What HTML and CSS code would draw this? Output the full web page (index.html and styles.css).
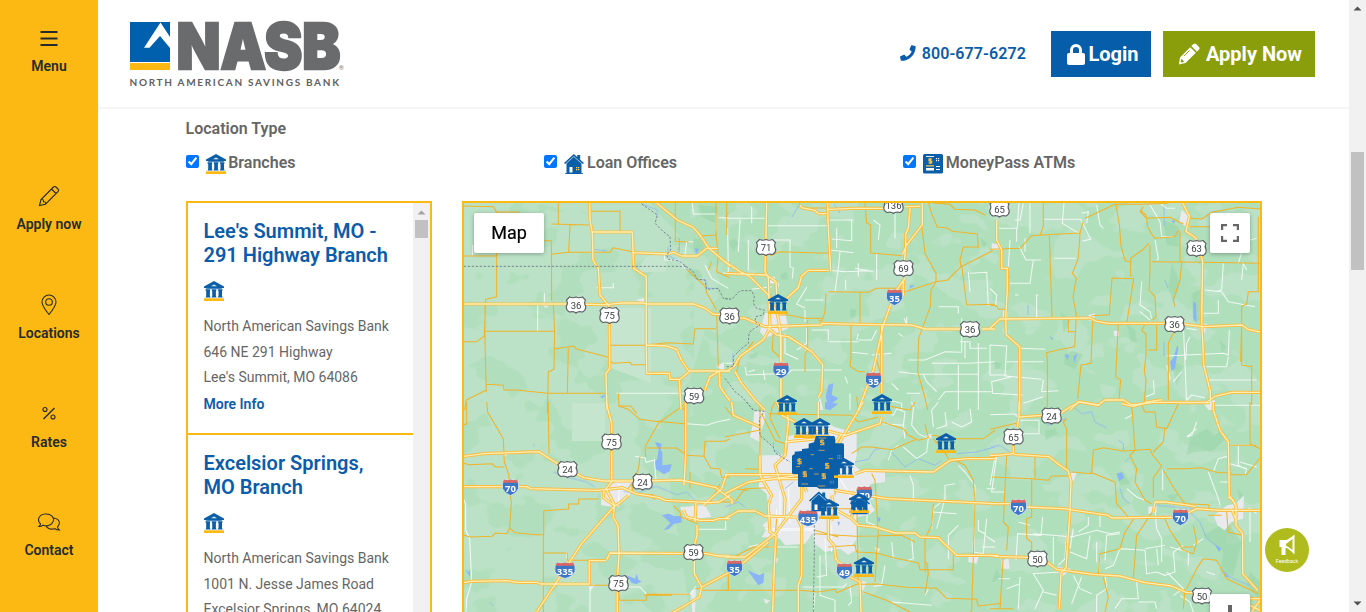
FILE: index.html
```html
<!DOCTYPE html>
<html lang="en">
<head>
<meta charset="utf-8">
<title>NASB Locations</title>
<link rel="stylesheet" href="styles.css">
</head>
<body>
<svg class="defs" width="0" height="0" aria-hidden="true">
  <symbol id="bank" viewBox="0 0 20 20"><path fill="#0b5fa8" d="M0 7V5.4L10 0l10 5.4V7h-1.500l-1 .8h-15L1.500 7zM1.500 8.200h4.700v1L5.900 10v5l.8 1.400H1.500L2.200 15v-5L1.500 9.200zM7.700 8.200h4.700v1l-.5.8v5l.8 1.400H7.500L8.200 15v-5L7.700 9.200zM13.900 8.200h4.600v1l-.5.8v5l.8 1.400h-5.100l.8-1.400v-5l-.6-.8z"/><path fill="#e5f0ee" d="M7 5.200 10 3.500l3 1.700z"/><path fill="#fdb913" d="M0 17.300h20V20H0z"/></symbol>
  <symbol id="house" viewBox="0 0 20 20"><path fill="#0b5fa8" d="M0 9 9.800 0l3.400 3V1h3v4.800L20 9l-1 1-1.500-1v10.300H19v.7H1v-.7h1.500V9L1 10z"/><path fill="none" stroke="#dcecf5" stroke-width=".7" d="m2 9.500 7.800-7 8 7"/><path fill="#fff" d="M5.500 13h3v5.500h-3z"/><path fill="#fdd05a" d="M12 13h1.300v1.300H12zM14 13h1.300v1.300H14zM12 15h1.300v1.300H12zM14 15h1.300v1.300H14z"/></symbol>
  <symbol id="atm" viewBox="0 0 20 20"><rect width="20" height="19.500" rx="1.500" fill="#0b5fa8"/><path fill="#e8f1f8" d="M3 2h8v1H3zM13 4h1.200v1.200H13zM15 4h1.200v1.200H15zM13 6h1.200v1.200H13zM15 6h1.200v1.200H15z"/><path fill="none" stroke="#fdc84a" stroke-width="1.200" d="M9 5H6v2h2.700v2H5.500M7.300 4v6M3 11.800h8"/><path fill="#fff" d="M3 14h8v2.500H3zM13 12h4v1h-4zM13 15h4v1h-4z"/></symbol>
  <symbol id="us" viewBox="-11 -9 22 18"><path fill="#fff" stroke="#5c6166" stroke-width="1.200" d="M-6.500-8Q-3-6.500 0-8Q3-6.500 6.500-8L9.500-5Q7.800-2 9.500 1Q10.500 5 6.500 7Q2 6 0 8Q-2 6-6.500 7Q-10.500 5-9.500 1Q-7.800-2-9.500-5Z"/></symbol>
  <symbol id="inter" viewBox="-11 -9 22 18"><path fill="#3b77c5" stroke="#e7eef8" stroke-width=".7" d="M-6-8Q-3-6.500 0-8Q3-6.500 6-8Q9-4 8 1Q6 6 0 8Q-6 6-8 1Q-9-4-6-8Z"/><path fill="#dc6763" d="M-6.500-8Q-3-6.500 0-8Q3-6.500 6.500-8L7.500-4.700H-7.500z"/></symbol>
  <symbol id="inter3" viewBox="-11 -9 22 18"><path fill="#3b77c5" stroke="#e7eef8" stroke-width=".7" d="M-8-8Q-4-6.500 0-8Q4-6.500 8-8Q11-4 10 1Q8 6 0 8Q-8 6-10 1Q-11-4-8-8Z"/><path fill="#dc6763" d="M-8-8Q-4-6.500 0-8Q4-6.500 8-8L9.500-4.700H-9.500z"/></symbol>
</svg>
<div class="page">
  <nav class="rail">
    <a class="rail-item menu"><svg width="20" height="20" viewBox="0 0 20 20"><path d="M1.500 3h17M1.500 9.500h17M1.500 16h17" stroke-width="1.900"/></svg><span>Menu</span></a>
    <a class="rail-item"><svg width="22" height="22" viewBox="0 0 22 22"><path d="M1.500 20.500 3 14.500 15.500 2q1-1 2.200-.2L20 4q1.200 1.200.2 2.500L7.500 19.200zM3 14.500q3-.3 2.500 2.300Q8 16.500 7.500 19.200M13.500 4l4.500 4.500"/></svg><span>Apply now</span></a>
    <a class="rail-item"><svg width="22" height="22" viewBox="0 0 22 22"><path d="M11 20.500Q4 12 4 8a7 7 0 0 1 14 0q0 4-7 12.500z"/><circle cx="11" cy="8" r="3.300"/></svg><span>Locations</span></a>
    <a class="rail-item rates"><svg width="22" height="22" viewBox="0 0 22 22"><path d="m5.500 16 11-11" stroke-width="1.500"/><circle cx="7" cy="6.500" r="2"/><circle cx="15" cy="14" r="2"/></svg><span>Rates</span></a>
    <a class="rail-item"><svg width="24" height="22" viewBox="0 0 24 22"><path d="M3.500 13C-.5 9 2 3.500 8 3c6-.5 10 3.500 8 7.800-2 3.500-6 4.700-10 3.400-1.300 1-2.500 1.300-4 1.300 1-1 1.500-1.500 1.500-2.500zM16.500 7c6 .5 7.500 5.500 4 9 0 1 .8 2 1.800 3-2 0-3.300-.5-4.300-1.300-4 1-7.500-.2-9-3"/></svg><span>Contact</span></a>
  </nav>

  <div class="main">
    <header class="top">
      <svg class="logo" width="216" height="68" viewBox="0 0 216 68">
        <path fill="#0060ad" d="M0 1h40v40H0z"/><path fill="#fff" d="M30.500 1.500 14 26.800h5.500L30 15l10 12v-11z"/>
        <path fill="#fdb913" d="M0 42h40v7H0z"/>
        <text class="logo-name" x="46.500" y="47.500" textLength="164" lengthAdjust="spacingAndGlyphs">NASB</text>
        <text class="logo-sub" x="-.5" y="64.500" textLength="209.500">NORTH AMERICAN SAVINGS BANK</text>
        <text class="logo-reg" x="209" y="48.500">®</text>
      </svg>
      <div class="actions">
        <a class="phone"><svg width="16" height="16" viewBox="0 0 512 512"><path fill="currentColor" d="m493 25-104-24c-11-3-23 3-27 14l-48 112c-4 10-1 22 7 28l61 50c-36 76-99 139-177 177l-50-61c-6-8-18-11-28-7L15 362C4 366-2 378 1 389l24 104c3 11 12 19 24 19 255 0 463-207 463-464 0-11-8-21-19-23z"/></svg><span>800-677-6272</span></a>
        <a class="btn login"><svg width="18" height="21" viewBox="0 0 18 21"><path fill="#fff" d="M2 9h1V6a6 6 0 0 1 12 0v3h1q2 0 2 2v8q0 2-2 2H2q-2 0-2-2v-8q0-2 2-2zm4 0h6V6a3 3 0 0 0-6 0z"/></svg><span>Login</span></a>
        <a class="btn apply"><svg width="22" height="22" viewBox="0 0 22 22"><path fill="#fff" d="M12.200 4.200 17.800 9.800 7.500 20 .8 21.500 2 14.500zM13.300 3.100 15.500 1q1.300-1.200 2.600 0L21 3.900q1.200 1.300 0 2.600l-2.100 2.200z"/><path fill="#8a9e0c" d="m3.300 15.800 3 3-2.700.7-1-1z"/><path stroke="#8a9e0c" stroke-width=".9" fill="none" d="m6 13 5.500-5.500"/></svg><span>Apply Now</span></a>
      </div>
    </header>

    <main class="content">
      <h2 class="filter-title">Location Type</h2>
      <div class="filters">
        <label><input type="checkbox" checked><svg width="20" height="20"><use href="#bank"/></svg><span>Branches</span></label>
        <label><input type="checkbox" checked><svg width="20" height="20"><use href="#house"/></svg><span>Loan Offices</span></label>
        <label><input type="checkbox" checked><svg width="20" height="20"><use href="#atm"/></svg><span>MoneyPass ATMs</span></label>
      </div>
      <div class="finder">
        <section class="list">
          <div class="items">
            <article class="item">
              <h3>Lee's Summit, MO -<br>291 Highway Branch</h3>
              <svg width="20" height="20"><use href="#bank"/></svg>
              <p>North American Savings Bank<br>646 NE 291 Highway<br>Lee's Summit, MO 64086</p>
              <a>More Info</a>
            </article>
            <article class="item">
              <h3>Excelsior Springs,<br>MO Branch</h3>
              <svg width="20" height="20"><use href="#bank"/></svg>
              <p>North American Savings Bank<br>1001 N. Jesse James Road<br>Excelsior Springs, MO 64024</p>
              <a>More Info</a>
            </article>
          </div>
          <div class="list-bar"><svg width="17" height="17"><path fill="#a3a3a3" d="M4.500 11.500h8l-4-4z"/></svg><i></i></div>
        </section>

        <section class="map">
          <svg class="tiles" width="796" height="409" viewBox="464 203 796 409">
            <defs>
              <filter id="woods" x="0" y="0" width="1" height="1" color-interpolation-filters="sRGB"><feTurbulence type="fractalNoise" baseFrequency=".022 .028" numOctaves="3" seed="8"/><feColorMatrix values="0 0 0 0 .694  0 0 0 0 .875  0 0 0 0 .741  26 0 0 0 -14.600"/></filter>
              <filter id="fields" x="0" y="0" width="1" height="1" color-interpolation-filters="sRGB"><feTurbulence type="fractalNoise" baseFrequency=".022 .03" numOctaves="3" seed="21"/><feColorMatrix values="0 0 0 0 .733  0 0 0 0 .886  0 0 0 0 .776  26 0 0 0 -14.200"/></filter>
            </defs>
            <rect x="464" y="203" width="796" height="409" fill="#bbe2c6"/>
            <path fill="#b0dfbc" d="M650 203 720 280 690 380 660 420 690 612H1260V203z"/>
            <rect x="464" y="203" width="230" height="409" filter="url(#woods)"/>
            <rect x="690" y="203" width="570" height="409" filter="url(#fields)"/>
            <!-- parks -->
            <g class="park">
              <path transform="translate(460 200) scale(.33333)" d="M700 115l25 3 12 30-15 20-22-12zM685 205l30 5 13 20-18 10-20-15zM715 15l60 5-10 50-40-20z"/>
              <path transform="translate(725 200) scale(.33333)" d="M10 125l20-10 10 15-15 25zM165 225l20-10 5 20-20 5zM375 325l20 5-5 20-15 2zM70 465l30-8-5 15-20 5zM765 110l20 20-10 15z"/>
              <path transform="translate(990 200) scale(.33333)" d="M520 60l45 20 5 60-40-5zM545 190l25 60-20 60-15-50zM605 280l25-10v90l-20 5zM410 370l25 20 5 40-20-10zM222 465l25-12 32 10-25 45-30-15zM10 485l25 5-5 15-15 3zM212 335l30 25-20 40zM690 420l20 20-15 20zM545 480l35 20-20 60z"/>
              <path transform="translate(990 402) scale(.33333)" d="M600 110l50-30 25 20 15-15 20 20-40 40-60 5-20 10zM165 85l30-5 8 15-35 18zM380 215l20-5 20 35-30 5zM530 280l35-5-15 25zM640 400l70-40 45 60-25 100-40-10 10-60zM20 500l15 30-30 10zM740 260l20 20-10 20zM780 510l30 30v60l-40-50z"/>
            </g>
            <path fill="#c5e5cf" d="M611 308h40v75l-40-15zM572 403h33v38h-33zM640 265l6-8 12-2 8 5v12h-26z"/>
            <!-- built-up areas -->
            <g class="town">
              <path transform="translate(725 402) scale(.33333)" d="M88 28H120V55L105 95V160H185L190 130 180 105 235 92 240 60 300 60 330 75 395 95V160L388 190 410 208H480V240L440 245 400 280 435 300 450 325 430 340 395 345 395 410 382 430 400 440 370 458 345 440 300 450 270 425 262 395 240 425 180 430 165 410 110 405 125 380 112 370 135 350 125 275 100 255 110 215 105 120 75 105 85 60zM400 535l25 5-10 25-15-5zM730 460l30 5-5 20-25-5zM600 100l20-5v15zM448 435l18 5-8 15zM115 590l20 5-12 12zM145 465l15 5-12 25z"/>
              <path transform="translate(460 402) scale(.33333)" d="M425 260l45-20 45-5-5 45-45 35-42-5zM660 315l75-5 20 35-80 10zM125 150l20 5-12 10zM385 550l20-3-12 20zM693 570l15-20-3 80h-8z"/>
              <path transform="translate(725 200) scale(.33333)" d="M130 230h20v20h-15zM120 340l60-5 10 50-70 30-15-20zM285 590l10 40h-20z"/>
              <path transform="translate(990 200) scale(.33333)" d="M575 30l25 20-5 35-28-20zM5 130l30 5v15H5zM40 330l15 5-3 25-15-5zM295 345l20-5-3 20-15 3zM370 392h17v17h-14zM625 380l25-10-5 30zM640 608l35-8v30h-20z"/>
              <path transform="translate(990 402) scale(.33333)" d="M235 215l25-5-8 25-15 5zM672 340l40-30 25-5 25-25-3 70-35 10-20 25-22-15zM475 315l25-5v20l-25 5zM200 495l45 5-30 25zM35 475l20-5 5 30H35zM70 35h20v20z"/>
              <path d="M716 366l8-4v10zM541 304l8 2-3 2zM636 300l8-2v5z"/>
            </g>
            <!-- rivers and lakes -->
            <g class="lake">
              <path transform="translate(460 402) scale(.33333)" d="M585 120l20 5-3 20 5 5v40l28-3-5 20-18 10-24-15-5-20 8-10 5-28zM605 340l20-5 20 8 18-2 3 20-25 5-15 15-15 3 20-20-15-15zM500 520l25 10 5-15 5 18 10 5-15 8-15-3zM15 500l10 10 5-5v20z"/>
              <path transform="translate(725 200) scale(.33333)" d="M310 555l15-5-5 35 20 10-30 25-8-30zM555 255l15 2-15 8z"/>
              <path transform="translate(725 402) scale(.33333)" d="M300 0l40 5-25 20-15-5zM68 505l35 15 15-8-3 30-15 8zM455 345l12 3-4 15zM337 358l8 3-4 12z"/>
              <path transform="translate(990 200) scale(.33333)" d="M610 305l8 5 2 60-10-15zM540 485l10-10 12-40 3 10-10 60-10 8zM224 463l13 3-5 15zM250 470l12-10-8 28zM178 408l12 8-5 3zM545 63l10-3-3 12z"/>
              <path transform="translate(990 402) scale(.33333)" d="M380 215l15-4 8 15-15 12zM675 430l18 8-5 12zM700 508l5 15 15 5z"/>
              <path d="M695 248l4 1-3 5zM600 397l6-3-3 4z"/>
            </g>
            <g class="river">
              <path transform="translate(460 200) scale(.33333)" d="M545 12 592 30V48M625 140l-3 25 33 17 57 56 25 2 5 25 33 0M655 140v20M400 148l40 5"/>
              <path transform="translate(460 402) scale(.33333)" d="M280 210l40 15 60 15 25 15M490 268l40 5 60-20 60 25 30-8 30 30M222 125v8M88 600l12 12"/>
              <path transform="translate(725 402) scale(.33333)" d="M145 120v20l20 15M390 180l40-8 20-30 20-3M500 150l40 45 40-25 50 20 20-15M695 155l60-5 55-15M0 315l40-15 20 15M180 260l25-20"/>
              <path transform="translate(990 402) scale(.33333)" d="M600 330l30 30 20 50 35 25M700 510l30 20 50 20M390 260l10 30 20 15M500 310l110 10M245 10l30 25 30-5 10 30 35 18M170 70l60-20M385 115l15 10v20M405 180l15-15M0 135l30-5 30 20"/>
              <path d="M1164 206v20M1168 288l-3-8M1164 342v14M733 353v14M1028 305v10M792 217l7-12M834 204l6 9"/>
            </g>
            <!-- local roads -->
            <g class="white">
              <path transform="translate(460 200) scale(.33333)" d="M697 9l3 33h68v50M775 53h30M803 85l2 130-15 5M675 165l5-40h20M612 165l3 15h40l20 25M735 195l20 40 50 30M38 135v30M253 278v30M233 315v80M410 263h50v-13M470 580h210"/>
              <path transform="translate(460 402) scale(.33333)" d="M680 65l60 5 30-10 40-8M525 163l30 5 3 13 25-7 5 60M478 245l-3 70M10 290l7 15v80l12 25 6 130-15 50-2 40M390 555v75M500 555h40l20 22M590 577h100l10-12M712 382h85v-25M320 450v20"/>
              <path transform="translate(725 200) scale(.33333)" d="M0 55h122M45 60l-5 95M125 77h190M125 120h70v80l10 5-3 30M70 120v90M80 20v50M300 210l60 5 70-3M345 155l-5 50-10 70M315 150l70 8M380 62v60l-60-5M315 60h70M335 85v60M445 60l20 15-5 45M510 35v80M455 160v80M400 190v40M390 205l55 10M362 240v30M400 400l-5 20M240 300h55M130 245l30 5-5 40M80 268l60-8M245 262l-30 50 25 12M240 330v35M545 350v25l-8-20M640 320h60v20M710 355v100M705 425h30v20h50M730 215l5 60M735 220l50-3 5 100M400 420h40l15-30M380 457l50 5M520 400l15 10M310 425h90M260 390h50v30M70 515l20-5M60 500l5 25 125-5 10-10h150M180 400v60l40 18M215 450l30-20v-45M115 510l5 30M440 465l60-5M500 550l20 20M520 515l60 8h180M550 480h50l60-25 50 2M700 495v135M620 490h110l80-5M635 575l-30-30-10-20M545 580h40M490 600l40 10v20M375 580v50M640 600l20-25h140M360 530l8 20M0 490h25M760 430v200M720 425v50"/>
              <path transform="translate(725 402) scale(.33333)" d="M475 65l60 5 5 40M480 25l25 15 10-20 25 10-5 40M560 0l5 20-5 50 20 25 30 15-5 40-30 20-40-35M640 0l-20 25 5 50M635 80l30-10-5-40M680 60l30 15 30-15-5-40M520 130l-20 15-10 30M555 220l10 30v50M620 330l75 5M690 245l-30 5v40l-35 30-5 60M700 190l20 20 30 40-3 200M660 290l-25 90M785 260h25M130 435h90M70 435l35-8M145 385h120M165 395v-130M195 365l-5-110M120 380h150M155 320v40M400 250v50M235 555h120l10-10M285 460v120l45 15v35M300 410l5 110-30 5M375 550l5 50-10 10M745 420v30l30 5 5-60-20-10v-30M500 600l120 10M500 420l5 50M560 410l5 60-15 5M480 490l-10 60-25 3M770 435h40M700 370l-30 30v70M785 350l-5 50 30 20M430 300l-5 60 25 10M320 370v80M345 230l40 65 60-5M270 575l-5 50M600 580l10-20"/>
              <path transform="translate(990 200) scale(.33333)" d="M27 85h55l5-80M80 85v40M60 120l-5 80M100 10l-10 50h-15M120 10v90M88 140l20 40h45M105 115v40M130 180l-10 70H60M193 175h65M145 285h-5v70M75 285h10M162 58h110l30 60-25 5M222 10l-5 60 50 30M275 40l20-5-5 35M320 15l10 60 10 10M480 15l30 50 5 45h35M495 120l10 55-5 5M455 245l-5 70 30 20 5 20M510 10l20 15h25M580 375l10 235M590 385l30 5M600 410l-10 20-3 50M530 468l60-3 110-5 15 5 3-75M645 270l50 5 20 30 80 15M700 190l-5 80-20 5M770 210l-10-20-5 50M640 340h45v-40M645 500h65l5-30M640 125h-20M760 140l-15 50M780 120l20-5M0 265l20 20-3 30M0 435l50 3-5 90 110 10M50 485h110M90 445l75 3M65 530l-60 15 3 35 90 5M160 540l-5 35 50-3M490 540l3 40-25 10M450 335l30 25M550 545l25-30M590 600l15-15 40 8M650 540h150M530 495l10 40-5 8M0 435v90h50M100 610l60-20"/>
              <path transform="translate(990 402) scale(.33333)" d="M0 38l75-2M87 55h60v40h-60M15 165l-15 85M20 160l-15 110h40M620 60l-15 40-15 5M590 105l30-25M655 210l30 80 5 20M670 210l15-40 30-8M690 240h25M745 130v60l20 10M750 180l50 15M720 130h80M495 320l5 60 15 30v70M518 205v60M410 260l30 25 25 10M720 185l50 15-5 20M745 330l35-10 20 15M780 330v90M665 10h145M78 475l5-80 70 5 5-55M130 395l60 5 55 5 75-20 40 10 30-5M190 405v80M300 400l-10 70-50-20M250 380l-10 60M320 420v60M345 475l5-75 40-5M295 345v25l-30 20M330 340v35M345 500l25-10 20-50 75 5 5 70 30-5 25 10 30-10-5-60 30-20M465 440l60-10M500 440l5 50M540 435l55 15v40M210 510l-80 5 30 50-25 55M90 525l-5 95M60 530h-35M250 520l20 40 35 15M330 460l-5 60M345 520l5 40-30 20v50M440 540l5 50h-50l-20 30M445 600h50l5 20M530 510l50 50-30 20M570 580l30 20 10 30M275 525l-30 80M160 570l40 10M120 370l-35-10M610 430l30-20M650 510l25 8M405 50l20-10M230 400l-5 70-20 20M50 560l40-15"/>
            </g>
            <!-- secondary roads -->
            <g class="minor">
              <path transform="translate(460 200) scale(.33333)" d="M11 18l90 2 8 16h70M110 36v254l-33 8-4 110-23 17H11M295 9v63M275 72l112 3M330 75l-4 82M250 122h24l1 180M275 163l50-6 125 0 10-14 60 13M391 34h89v61M11 168h99M75 312v115l4 150M78 394h205M280 315l4 80-2 113-17 8-3 124M284 447l56-9 10 9 95 25M325 445l-3 134M78 553l52 3 2 14h38l92 10h178M79 570l-60 30-5 30M450 436h110M450 482l10 8 50-3 5 7h45M560 435l60-7 80 4 5-46h63M770 340l5 160M475 580l2 38h35l18 22M646 9v115l40 2M768 9v96l-48 3M768 105l7 60-5 50 40 18M680 208l55 50 5 20 30 52M658 115v40M745 210l10-25M668 630l10-15"/>
              <path transform="translate(460 402) scale(.33333)" d="M80 0l3 30 47 80 3 70 14 40v30l7 50-5 78M265 0v25l2 130M11 183l15 5 70-3 10 10h27M20 0v65l-9 3M11 400l20 5 65-2 10-10 35 2 8-18 15 15 75 7 12-3 0-70 75-5v-15h30v-15h60M250 395v235M250 453h72v22h65M388 475v75h60M475 12l30 10 35 30 60 8 70-50M600 55l-45 80 2 30M540 163l-5 40-15 25M560 138h90l30 22M590 58l90 8M680 160l52 3 3-45h60l15-8M732 163l20 35 28 3 5 25h25M780 245l-30 55M690 260v-50M480 595h80v-18h130M475 570l5 25M550 580h85M500 265l15-20 5 30 45 3 20 15M640 310l20 20 3 15 50 20M560 278h20M710 300h100M705 560h20v5h80v-60"/>
              <path transform="translate(725 200) scale(.33333)" d="M135 167l30-12 145 5M420 9l5 60 12 5v85l95 8M590 75l10 85 33 60v25l-30 10-63 20M633 245l35-5 40-40 95-48M708 200l-3-20 10-40 45 2-3-40-75-8-15-10-30-3-17-40-10-34M625 9l50 4 15 15 60 2 30 15M710 195l10 80 5 40 85-2M405 278v90M303 280l-3 55-10 30-10-5M310 275l120 2 25-12h75M378 373v100l-3 25 25 17h20M633 245l-15 25-2 50-35 95-3 100 20 70 10 45M160 345h30l50 10h50M248 360v85M250 445l-10 20v50M223 9l5 15h80M395 590l5 40M145 390l-3 60 20 20M5 0v105M85 425l-40 50-10 40M0 50l10-10M455 480l10 35"/>
              <path transform="translate(725 402) scale(.33333)" d="M0 15l25 30M0 105l75-15 28-5M105 10v210M110 35l40 80 30 10M130 35l250 5 20 20 60-15M150 0l-10 20-5 30 30 60M380 155l30-20h30l60 8 70-30M480 10l75 15 15-25M470 60l65 20 15 20 30 15 30-8-10-40M620 100l75 10h80l35-25M625 110l40 50 10 20M680 170l40 20 25 45 5 60-5 170-5 160-10 15M440 215l10 20 10 160-5 55-5 90M395 260l5 290M270 395l120 8 140-3 40 20M270 385l70 20M310 435l80-5 5 20 60 3 55 15 70 15 5 20h100v-55M625 305l-5 65-20 40v100M605 480l5 35-10 60M150 410l5-60M30 260l40 5M0 565h225l55 5 50-8 5 10 60-25 60-1 90 10 90 3 30 30 90 3 5 20 70-8M415 570l70 25 70 35M10 565V480M30 300l30-40 70-3M60 200l45 2M330 240v40M310 320h80M15 470l70-35h60"/>
              <path transform="translate(990 200) scale(.33333)" d="M0 148l90-3 35-38 45-3 100-5 10-35M160 10v70l-10 25M178 107l8 245M270 100l-5 75-18 45 12 15-10 55 10 55-5 95-50 10-35 8 3 20v145M60 230h-5M285 55l90-42h85l75-3M378 13l10 60 5 65 13 45 13 2M305 347l53-3 8-110 65 2-20 130M422 230v-55l35-25 20-20M450 30l18 15 5 35 20 35 60-5 15-20M460 20l-10 15 20 20 70-3 40 20M480 135v80l-3 55 18 20 3 60-10 10M485 185l155 2 170 3M570 95v85l5 10-5 50-20 60 5 20M600 55l35 2 30-20 80-15 65 5M600 80h80M770 315l5-40h30V50M770 310l-15 10v55l-3 110M385 370l-8 160 15 10-5 60M308 365l-5 125-30 5-5 50-5 50M235 355v40h20M465 372l-10 20 13 10v60l-5 50 5 30-5 65M500 370v80h-25M550 400l-15 30v170M755 380v115l30 5M785 495v120M0 315l20 3 5 10h20"/>
              <path transform="translate(990 402) scale(.33333)" d="M0 82l85-20M50 160l-10 200 15 15-5 70M135 165v65M5 225l120 5 50 5 10-13h50M125 230v115l-15 5v60l15 10v40M230 50l-10 10 10 20v120M245 210l60 5 5-70 30-8 60 10 80-5 10 20 25 30-25 35v60M300 210l75 30 5 65 35 40M425 10l5 60 5 75-15 15 20 40-5 40 30 55 20 10M455 10l10 20h30l5 45 30 5 35-75M525 75l-5 45-30 30M530 200h55l50-3 50 15h40M720 218h50l40-50M520 205l30 50 20 30 15 20 70 3 5 15M520 340l20 45 40 60 30 10 10-35-10-50M490 325l-50 75-10 130M435 345l-30 45-15 50-60 15-5 60M580 435h30M590 560l30-60 20-30 40 5 30 55 95 45M585 560l-5 60M340 525l15 60-10 45M40 460l-10 160M0 620h70M730 340l5-20M710 330l5 60 40 10M780 0v125l30 15M720 130h80M695 340h-40"/>
            </g>
            <!-- highways: casing, then fill -->
            <g id="highways" class="hw-casing">
              <path transform="translate(460 200) scale(.33333)" d="M11 312h309l120 2 45-5h60l15 3h140l35 13 25 18h50M389 9l1 51 7 40 2 80 16 25 5 80 28 35 1 185-11 15 3 110M397 96h120l4 109 38 25v205l1 85h68l2 18h28l5 90M559 435l61 3 30 10 14 32 22 33h124M521 158l99 4 20-5 25 11h47l28-23h33M590 9l65 53 45 20 22 26 23 35 65 55M778 513l-28 17-12 30-3 12M778 515l2 45 20 30 10 12M658 540l28-24"/>
              <path transform="translate(460 402) scale(.33333)" d="M11 254h189l12 6 200 5 30-3 45-5 40 18 70 12 20 8 130 7 30-2 33-20M438 0l17 65v175l-17 20 26 50-5 35 15 25 3 90-5 70v100M11 163l60-8 165-6 60 38 75 40 60 10h130l100-3 105 22 50 38v13M465 310 365 425l-85 130-50 75M432 262l-2 25 35 25 15-10 25-22M677 0v160l-5 90M708 300l-3 60M800 215l-15 45-55 50M670 325l10 20 40 10h40l15-5 35 0M711 370v30l-8 30v85l22 40-7 30-50 30-45 25M725 555l85-45M440 473l10-20 290 2 35 7h35M11 542l20-4 110-2 30 5h60l10 5h147v-70h50"/>
              <path transform="translate(725 200) scale(.33333)" d="M125 9l-2 100-3 105 10 20 5 150-20 35-70 50-18 30L5 515M0 185l45 30 30 15 55 55 28 60 8 50 2 235M0 220l125 5 28 20 5 85M308 9v35l9 170M185 295l35-32 10-35 20-17h60M225 15l5 8 40 8 10 10h25M308 28l75-3h90M540 20l45-1M592 9v65l-50 65-5 60M555 25l-5 60-8 18v40l-10 20M540 235l-25 35M535 240v45l-20 10M500 305l-25 70-30 135-45 120M470 375v205M0 350l60 5 60 25 170-5v-5l110 3 160 2 40 12h110M770 387h40M130 385l25 20 35 5 70 45 33 38-3 80-10 20M30 515l20 35 40 50 30 30M168 405v225"/>
              <path transform="translate(725 402) scale(.33333)" d="M20 0l5 40 80 35M185 0l5 60-10 100-30 30 30 100-2 50M155 0l15 30M170 40l40 20M280 0v50M415 0l-65 110-20 40M470 45l-5 20-105 35-60-15-90 15M0 275l70-35 150-20M0 218h205M105 160v60l35 60-10 30 5 80 18 12-5 90-5 135-20 30M330 125l20-30M390 215l30-10 205 5 50-35 50-5h85M330 265l155 25 325 15M335 325l45 25 20 20 50 5 60 18h60l15 12 55 2 20 20 35 33h125M0 350l40-23h50l30 15 95 3M0 465h60l90-70 80-105V180M20 510l50-40 60-50M215 345l15 30v145l-10 30v80M310 350v60l18 22 5 40 20 20M375 525l30 15 3 90M320 280l10 50-10 25M180 120l100-10M150 230h80l15 40M380 345l5-25 30-30"/>
              <path transform="translate(990 200) scale(.33333)" d="M20 60v60l15 30v55h17v60l-5 90 2 50 40 35v190M0 385l30-28 270-3 20 10 35 6h170M580 372l60 8 115-5 20 13 35 8M578 9l20 40-10 45 30 20 20 70-3 185 3 50 3 75 20 80v30M240 630l25-25 60 10 20-15h55l25 15 65-8h160l25-18 50-12h85M465 607l50-8"/>
              <path transform="translate(990 402) scale(.33333)" d="M87 0v45l-5 30M87 45l70-5M210 35l30-20 30-15 55 10 10-10M395 5l35 8 35-10M565 2h95M670 0v25l20 60 25 35 3 160 20 30v60l20 25v120l45 50M70 120v35l-50 5H0M72 157l105 7 25 20 33 23 8 30-3 90-12 170-15 15-5 110M0 305h60M110 315l110 5 135 20 10 8 110-2h75M490 330l5-30h30l60 8 30 5M590 335l30-15 70 5h120M0 460l20 3 95 3M170 480l30 22 110 15 80 5 75 20 80 10 45 20h20M715 285l15 10 10 25M785 630l25-35M775 590h35M780 610l30 15M740 360l-15-40"/>
            </g>
            <use href="#highways" class="hw-fill"/>
            <!-- state lines -->
            <g class="border">
              <path transform="translate(460 200) scale(.33333)" d="M11 199H680M545 12 592 45 585 70 610 95 630 110 632 150 620 165 625 178 655 182 700 215 712 238 735 240 740 268 775 265 790 295 810 298"/>
              <path transform="translate(725 200) scale(.33333)" d="M0 295 20 298 45 272H80L88 290 85 310 95 325 118 330 115 345 92 350 90 365 105 375 80 390 72 400 70 430 50 445 25 470V500H0M0 535l30 40 20 15 35 40"/>
              <path transform="translate(725 402) scale(.33333)" d="M65 0 85 25 118 28 103 50 105 100 145 135 150 152 195 180M268 370v80l-3 180"/>
            </g>
            <!-- route shields -->
            <g class="us-text">
              <g transform="translate(576 305)"><use href="#us" x="-11" y="-9" width="22" height="18"/><text y="3.500">36</text></g>
              <g transform="translate(609.500 315.500)"><use href="#us" x="-11" y="-9" width="22" height="18"/><text y="3.500">75</text></g>
              <g transform="translate(694 396)"><use href="#us" x="-11" y="-9" width="22" height="18"/><text y="3.500">59</text></g>
              <g transform="translate(729.500 316)"><use href="#us" x="-11" y="-9" width="22" height="18"/><text y="3.500">36</text></g>
              <g transform="translate(766 247.500)"><use href="#us" x="-11" y="-9" width="22" height="18"/><text y="3.500">71</text></g>
              <g transform="translate(893.500 205.500)"><use href="#us" x="-12" y="-9" width="24" height="18"/><text y="3.500">136</text></g>
              <g transform="translate(999.500 209)"><use href="#us" x="-11" y="-9" width="22" height="18"/><text y="3.500">65</text></g>
              <g transform="translate(903.500 268.500)"><use href="#us" x="-11" y="-9" width="22" height="18"/><text y="3.500">69</text></g>
              <g transform="translate(970 329.500)"><use href="#us" x="-11" y="-9" width="22" height="18"/><text y="3.500">36</text></g>
              <g transform="translate(1196.500 248.500)"><use href="#us" x="-11" y="-9" width="22" height="18"/><text y="3.500">63</text></g>
              <g transform="translate(1174.500 324.500)"><use href="#us" x="-11" y="-9" width="22" height="18"/><text y="3.500">36</text></g>
              <g transform="translate(1051.500 416)"><use href="#us" x="-11" y="-9" width="22" height="18"/><text y="3.500">24</text></g>
              <g transform="translate(1013.500 437)"><use href="#us" x="-11" y="-9" width="22" height="18"/><text y="3.500">65</text></g>
              <g transform="translate(1037.500 559)"><use href="#us" x="-11" y="-9" width="22" height="18"/><text y="3.500">50</text></g>
              <g transform="translate(1202 596)"><use href="#us" x="-11" y="-9" width="22" height="18"/><text y="3.500">50</text></g>
              <g transform="translate(611.500 442)"><use href="#us" x="-11" y="-9" width="22" height="18"/><text y="3.500">75</text></g>
              <g transform="translate(567.500 469.500)"><use href="#us" x="-11" y="-9" width="22" height="18"/><text y="3.500">24</text></g>
              <g transform="translate(642.500 482)"><use href="#us" x="-11" y="-9" width="22" height="18"/><text y="3.500">24</text></g>
              <g transform="translate(693.500 552.500)"><use href="#us" x="-11" y="-9" width="22" height="18"/><text y="3.500">59</text></g>
              <g transform="translate(618.500 583.500)"><use href="#us" x="-11" y="-9" width="22" height="18"/><text y="3.500">75</text></g>
            </g>
            <g class="i-text">
              <g transform="translate(510.500 487.500)"><use href="#inter" x="-11" y="-9" width="22" height="18"/><text y="4">70</text></g>
              <g transform="translate(565 570.500)"><use href="#inter3" x="-11" y="-9" width="22" height="18"/><text y="4">335</text></g>
              <g transform="translate(734.500 568.500)"><use href="#inter" x="-11" y="-9" width="22" height="18"/><text y="4">35</text></g>
              <g transform="translate(781 370.500)"><use href="#inter" x="-11" y="-9" width="22" height="18"/><text y="4">29</text></g>
              <g transform="translate(894.500 297.500)"><use href="#inter" x="-11" y="-9" width="22" height="18"/><text y="4">35</text></g>
              <g transform="translate(873.500 380.500)"><use href="#inter" x="-11" y="-9" width="22" height="18"/><text y="4">35</text></g>
              <g transform="translate(864.500 494.500)"><use href="#inter" x="-11" y="-9" width="22" height="18"/><text y="4">70</text></g>
              <g transform="translate(808 518.500)"><use href="#inter3" x="-11" y="-9" width="22" height="18"/><text y="4">435</text></g>
              <g transform="translate(844.500 571.500)"><use href="#inter" x="-11" y="-9" width="22" height="18"/><text y="4">49</text></g>
              <g transform="translate(1018.500 507.500)"><use href="#inter" x="-11" y="-9" width="22" height="18"/><text y="4">70</text></g>
              <g transform="translate(1180.500 517.500)"><use href="#inter" x="-11" y="-9" width="22" height="18"/><text y="4">70</text></g>
            </g>
            <!-- location pins -->
            <use href="#bank" x="768" y="294" width="20" height="20"/>
            <use href="#bank" x="777" y="395" width="20" height="20"/>
            <use href="#bank" x="872" y="394" width="20" height="20"/>
            <use href="#bank" x="936" y="433" width="20" height="20"/>
            <use href="#bank" x="854" y="557" width="20" height="20"/>
            <use href="#bank" x="794" y="418" width="20" height="20"/>
            <use href="#bank" x="810" y="418" width="20" height="20"/>
            <g transform="translate(740 370) scale(.33333)">
              <path fill="#0b5fa8" d="M228 198h54q4 0 4 22h22q4 0 4 5v70h-18v57q0 4-4 4h-52l-8-5h-52q-4 0-4-4v-35h-14q-4 0-4-4v-49q0-5 8-6v-8l22-2v-6l20-2v-14l16-4z"/>
              <g fill="none" stroke="#d9ad4e" stroke-width="4"><path d="M252 211h-10v6h9v7h-11M246 208v18M184 268h-10v6h9v7h-11M178 264v20M267 281h-10v6h9v7h-11M261 278v19M200 306h-10v6h9v7h-11M194 303v19M257 312h-10v6h9v7h-11M251 309v19"/><path stroke-width="2.500" d="M236 204h22M236 241h18M212 254h10M208 296h10M184 342h20M234 348h22M222 312h14M266 266h14M168 290h12"/></g>
              <path fill="none" stroke="#8fbce0" stroke-width="2" stroke-dasharray="3 2" d="M292 256h12M292 261h12M292 265h12M269 334h14M269 339h14"/>
            </g>
            <use href="#bank" x="834" y="458" width="20" height="20"/>
            <use href="#house" x="809" y="491.500" width="20" height="20"/>
            <use href="#bank" x="819" y="499" width="20" height="20"/>
            <use href="#house" x="850" y="494.500" width="20" height="20"/>
            <use href="#bank" x="849" y="493" width="20" height="20"/>
          </svg>
          <button class="map-type">Map</button>
          <button class="full"><svg width="18" height="18" viewBox="0 0 18 18"><path fill="none" stroke="#666" stroke-width="2.200" d="M1.100 6V1.100H6M12 1.100h4.900V6M16.900 12v4.900H12M6 16.900H1.100V12"/></svg></button>
          <button class="zoom-in"><svg width="18" height="18" viewBox="0 0 18 18"><path stroke="#666" stroke-width="4" d="M9 0v18M0 9h18"/></svg></button>
        </section>
      </div>
    </main>
    <a class="feedback"><svg width="44" height="44" viewBox="0 0 44 44"><path fill="#fff" d="M14.500 12h7l5-3 3-2.500v20L26 23l-4-3h-1.500v7h-4v-8h-2z"/><path fill="#b0bb1d" d="m21 16 6.500-5v11l-6.500-4.500z"/><text x="22" y="35">Feedback</text></svg></a>
  </div>
  <div class="page-bar"><svg width="17" height="17"><path fill="#505050" d="M4.500 10.500h8l-4-4z"/></svg><i></i><svg width="17" height="17"><path fill="#505050" d="M4.500 6.500h8l-4 4z"/></svg></div>
</div>
</body>
</html>
```
FILE: styles.css
```css
* { box-sizing: border-box; }
body { margin: 0; font-family: Roboto, "Liberation Sans", sans-serif; color: #666; background: #fff; overflow: hidden; }
.defs { position: absolute; }
h2, h3, p { margin: 0; }
.page { display: flex; height: 612px; overflow: hidden; }

.rail { width: 98px; flex: none; background: #fdb913; display: flex; flex-direction: column; }
.rail-item { flex: none; display: flex; flex-direction: column; align-items: center; height: 109px; font-size: 14px; font-weight: 600; line-height: 20px; color: #262b2c; }
.rail-item svg { fill: none; stroke: #262b2c; stroke-width: 1.100; margin-bottom: 7px; }
.rail-item.menu { height: 185px; padding-top: 29px; }
.rail-item.rates { height: 108px; }

.main { flex: 1; position: relative; min-width: 0; }
.top { height: 109px; border-bottom: 2px solid #f6f6f6; display: flex; justify-content: space-between; align-items: flex-start; padding: 21px 34px 0 32px; }
.logo { overflow: visible; }
.logo-name { font: 900 63px Inter, sans-serif; fill: #6a6b6d; stroke: #6a6b6d; stroke-width: 2.400; }
.logo-sub { font: 700 10px Lato, sans-serif; fill: #5f6062; }
.logo-reg { font: 6px Roboto, sans-serif; fill: #6a6b6d; }
.actions { display: flex; align-items: center; padding-top: 10px; }
.phone { display: flex; align-items: center; gap: 6px; width: 126px; white-space: nowrap; color: #0b5caa; font-size: 16px; font-weight: 600; letter-spacing: .1px; margin: 0 25px 2px 0; }
.btn { height: 46px; display: flex; align-items: center; justify-content: center; color: #fff; font-size: 20px; font-weight: 700; }
.login { width: 100px; background: #065eab; gap: 3px; margin-right: 12px; padding-left: 4px; }
.apply { width: 152px; background: #8a9e0c; gap: 6px; padding-left: 2px; }

.content { padding: 8px 87px 0 87.500px; }
.filter-title { font-size: 16px; font-weight: 600; line-height: 24px; }
.filters { display: grid; grid-template-columns: repeat(3, 1fr); height: 60px; padding-top: 10px; }
.filters label { display: flex; align-items: flex-start; font-size: 16px; font-weight: 600; line-height: 24px; }
.filters input { width: 13px; height: 13px; margin: 4px 7px 0 0; }
.filters svg { margin: 3px 2.700px 0 0; }

.finder { display: flex; gap: 30px; height: 411px; }
.list { width: 246.500px; height: 440px; border: 2px solid #fdb913; display: flex; overflow: hidden; }
.items { flex: 1; }
.item { height: 232px; padding: 16px 14px 0 16px; border-bottom: 2px solid #fdb913; }
.item h3 { font-size: 20px; font-weight: 600; line-height: 24px; white-space: nowrap; color: #0b5caa; }
.item svg { display: block; margin: 14px 0 13px; }
.item p { font-size: 14px; line-height: 25.600px; white-space: nowrap; }
.item a { display: block; font-size: 14px; font-weight: 600; line-height: 26px; color: #0b5caa; }
.list-bar { width: 17px; background: #f1f1f1; display: flex; flex-direction: column; align-items: center; }
.list-bar svg { flex: none; }
.list-bar i { width: 13px; height: 18px; background: #c1c1c1; }

.map { width: 800px; height: 440px; border: 2px solid #fdb913; position: relative; }
.tiles { display: block; }
.map button { position: absolute; border: 0; border-radius: 2px; background: #fff; box-shadow: 0 1px 4px rgba(0, 0, 0, .3); padding: 0; display: flex; align-items: center; justify-content: center; }
.map .map-type { left: 10px; top: 10px; width: 70px; height: 40px; padding-bottom: 2px; font: 400 18px Roboto, sans-serif; color: #000; -webkit-text-stroke: .2px #000; }
.map .full { right: 10px; top: 10px; width: 40px; height: 40px; }
.map .zoom-in { right: 10px; top: 391px; width: 40px; height: 40px; }
.park { fill: #98d4a8; opacity: .55; }
.town { fill: #e8eaed; }
.lake { fill: #8ab4f8; }
.river { fill: none; stroke: #8ab4f8; stroke-width: 3px; opacity: .75; }
.river path:last-child { stroke-width: 1px; }
.white { fill: none; stroke: #fff; stroke-width: 3.200px; opacity: .8; }
.minor { fill: none; stroke: #f0b429; stroke-width: 3.200px; stroke-linejoin: round; }
.hw-casing { fill: none; stroke-linejoin: round; }
#highways { stroke: var(--road, #f8bd45); stroke-width: var(--road-width, 9.500px); }
.hw-fill { --road: #ffefb0; --road-width: 4px; }
.border { fill: none; stroke: #788991; stroke-width: 3px; stroke-dasharray: 7 5; }
.us-text text { font: 9.500px Roboto, sans-serif; fill: #3c4043; text-anchor: middle; }
.i-text text { font: 700 9.500px "Noto Sans", sans-serif; fill: #fff; text-anchor: middle; }

.feedback { position: absolute; left: 1167px; top: 528px; width: 44px; height: 44px; border-radius: 50%; background: #b0bb1d; }
.feedback text { font: 5.200px Roboto, sans-serif; fill: #fff; text-anchor: middle; }
.page-bar { width: 17px; flex: none; background: #f1f1f1; display: flex; flex-direction: column; align-items: center; }
.page-bar svg { flex: none; }
.page-bar i { width: 13px; height: 118px; background: #c1c1c1; margin: 135px 0 auto; }
```
